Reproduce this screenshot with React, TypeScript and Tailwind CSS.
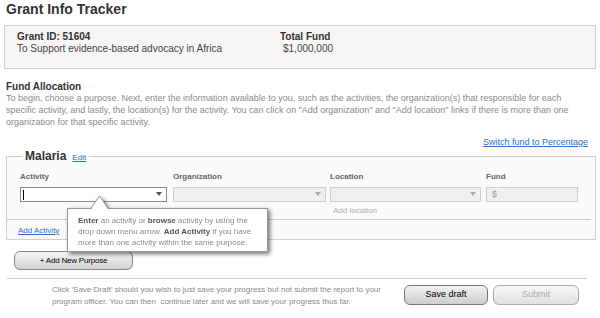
import React from 'react';

const Caret = ({ color }: { color: string }) => (
  <svg width="6" height="4" viewBox="0 0 6 4" className="absolute right-[4px] top-[4px]">
    <path d="M0 0h6L3 4z" fill={color} />
  </svg>
);

const Tooltip = () => (
  <div className="absolute left-[67px] top-[208px] w-[201px] h-[44px] drop-shadow-[2px_2px_2px_rgba(0,0,0,0.55)]">
    <div className="relative w-full h-full border border-[#999] bg-white pl-[10px] pt-[6px] text-[8px] leading-[11px] text-[#8a8a8a] whitespace-nowrap">
      <svg width="20" height="15" viewBox="0 0 20 15" className="absolute left-[22px] top-[-14px]">
        <polygon points="0.5,15 9.5,1 18.5,15" fill="#fff" />
        <polyline points="0.5,14 9.5,1 18.5,14" fill="none" stroke="#999" strokeWidth="1" />
      </svg>
      <b className="text-[#555]">Enter</b> an activity or <b className="text-[#555]">browse</b> activity by using the
      <br />
      drop down menu arrow. <b className="text-[#555]">Add Activity</b> if you have
      <br />
      more than one activity within the same purpose.
    </div>
  </div>
);

export default function App() {
  return (
    <div className="relative w-[600px] h-[318px] overflow-hidden bg-white font-['Liberation_Sans',Arial,sans-serif]">
      <h1 className="pl-[6px] text-[14px] leading-[18px] font-bold text-[#333]">Grant Info Tracker</h1>

      <div className="mt-[7px] ml-[4px] w-[592px] h-[44px] border border-[#cfcfcf] bg-[#f7f6f5] pl-[12px] pt-[5px] flex">
        <div className="w-[263px]">
          <div className="text-[10px] leading-[12px] font-bold text-[#333]">Grant ID: 51604</div>
          <div className="text-[10px] leading-[12px] text-[#444]">To Support evidence-based advocacy in Africa</div>
        </div>
        <div>
          <div className="text-[10px] leading-[12px] font-bold text-[#333]">Total Fund</div>
          <div className="pl-[3px] text-[10px] leading-[12px] text-[#444]">$1,000,000</div>
        </div>
      </div>

      <div className="mt-[12px] pl-[6px]">
        <h2 className="text-[10px] leading-[11px] font-bold text-[#333]">Fund Allocation</h2>
        <p className="w-[590px] whitespace-nowrap text-[9px] leading-[12px] text-[#8a8a8a]">
          To begin, choose a purpose. Next, enter the information available to you, such as the activities, the organization(s) that responsible for each
          <br />
          specific activity, and lastly, the location(s) for the activity. You can click on "Add organization" and "Add location" links if there is more than one
          <br />
          organization for that specific activity.
        </p>
      </div>

      <div className="mt-[8px] flex justify-end pr-[12px]">
        <a className="text-[9px] leading-[12px] text-[#2f6fc0] underline">Switch fund to Percentage</a>
      </div>

      <fieldset className="ml-[6px] w-[590px] border border-[#cfcfcf] bg-[#fafaf9] pb-[3px]">
        <legend className="ml-[15px] px-[3px] leading-[14px]">
          <span className="text-[12px] font-bold text-[#333]">Malaria</span>
          <a className="ml-[6px] text-[8px] text-[#2f6fc0] underline">Edit</a>
        </legend>

        <div className="mt-[7px] flex items-start pl-[13px]">
          <div className="w-[147px]">
            <div className="text-[8px] leading-[10px] font-bold text-[#666]">Activity</div>
            <div className="relative mt-[5px] h-[15px] border border-[#8a8a8a] bg-white">
              <span className="absolute left-[2px] top-[2px] h-[10px] w-px bg-black" />
              <Caret color="#555" />
            </div>
          </div>
          <div className="ml-[6px] w-[153px]">
            <div className="text-[8px] leading-[10px] font-bold text-[#666]">Organization</div>
            <div className="relative mt-[5px] h-[15px] border border-[#cfcfcf] bg-[#efefef]">
              <Caret color="#aaa" />
            </div>
            <div className="mt-[4px] text-[8px] leading-[10px] text-[#b0b0b0]">Add Organization</div>
          </div>
          <div className="ml-[4px] w-[151px]">
            <div className="text-[8px] leading-[10px] font-bold text-[#666]">Location</div>
            <div className="relative mt-[5px] h-[15px] border border-[#cfcfcf] bg-[#efefef]">
              <Caret color="#aaa" />
            </div>
            <div className="mt-[4px] pl-[3px] text-[8px] leading-[10px] text-[#b0b0b0]">Add location</div>
          </div>
          <div className="ml-[5px] w-[92px]">
            <div className="text-[8px] leading-[10px] font-bold text-[#666]">Fund</div>
            <div className="mt-[5px] h-[15px] border border-[#cfcfcf] bg-[#efefef] pl-[5px] text-[9px] leading-[13px] text-[#999]">$</div>
          </div>
        </div>

        <div className="mt-[3px] mr-[4px] border-t border-[#cccccc]" />
        <div className="mt-[6px] pl-[11px] text-[8px] leading-[10px]">
          <a className="text-[#2f6fc0] underline">Add Activity</a>
        </div>
      </fieldset>

      <button className="mt-[11px] ml-[14px] flex h-[19px] w-[119px] items-center justify-center rounded-[6px] border border-[#888] bg-linear-to-b from-[#f6f6f6] to-[#d2d2d2] text-[8px] tracking-[-0.2px] text-black">
        + Add New Purpose
      </button>

      <div className="mt-[8px] ml-[7px] w-[580px] border-t border-[#cccccc]" />

      <div className="flex items-start">
        <p className="mt-[5px] ml-[52px] w-[352px] whitespace-nowrap text-[8px] leading-[12px] text-[#8a8a8a]">
          Click 'Save Draft' should you wish to just save your progress but not submit the report to your
          <br />
          program officer. You can then{'\u00a0'} continue later and we will save your progress thus far.
        </p>
        <div className="mt-[6px] flex">
          <button className="h-[20px] w-[84px] rounded-[6px] border-[1.5px] border-[#777] bg-linear-to-b from-[#f2f2f2] to-[#cdcdcd] text-[9px] text-black">
            Save draft
          </button>
          <button className="ml-[5px] h-[20px] w-[86px] rounded-[6px] border-[1.5px] border-[#aaa] bg-linear-to-b from-[#f7f7f7] to-[#e0e0e0] text-[9px] text-[#aaa]">
            Submit
          </button>
        </div>
      </div>

      <Tooltip />
    </div>
  );
}
